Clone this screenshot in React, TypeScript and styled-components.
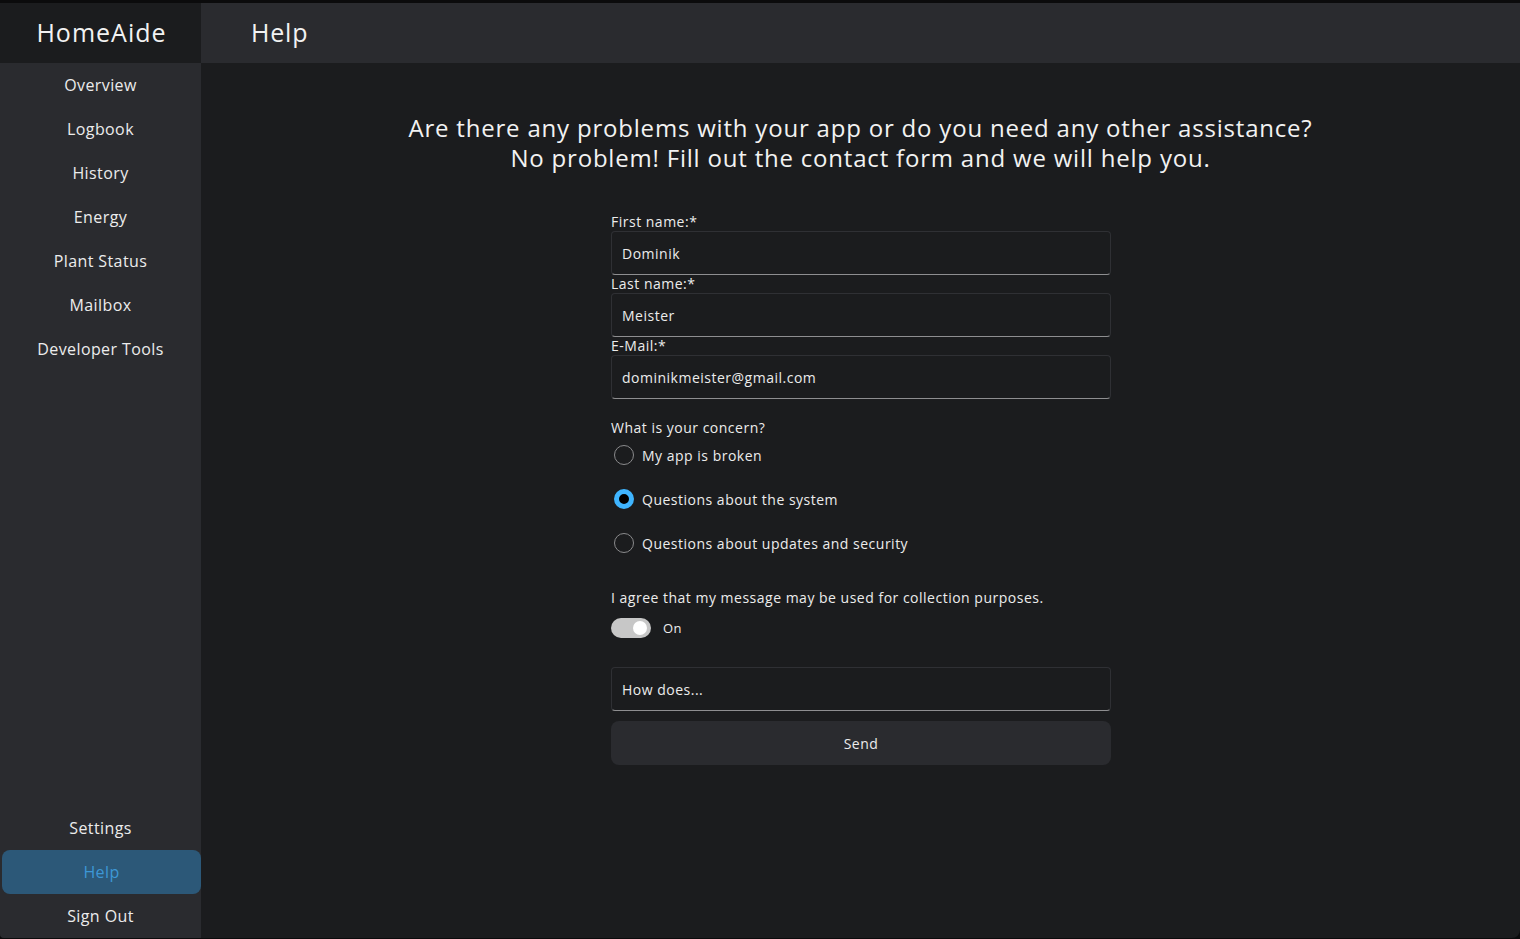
import React, { useState } from "react";
import styled, { createGlobalStyle } from "styled-components";

const GlobalStyle = createGlobalStyle`
  html, body { margin: 0; padding: 0; background: #0b0b0c; }
  body { font-family: "Open Sans", "Noto Sans", sans-serif; color: #ececec; }
  * { box-sizing: border-box; }
`;

const Shell = styled.div`
  margin-top: 3px;
  height: 935px;
  width: 1520px;
  display: grid;
  grid-template-columns: 201px 1fr;
  grid-template-rows: 60px 1fr;
  background: #1b1c1e;
  border-bottom-right-radius: 8px;
  border-bottom-left-radius: 4px;
  overflow: hidden;
`;

const Logo = styled.div`
  background: #1b1c1e;
  display: flex;
  align-items: center;
  justify-content: center;
  font-size: 25px;
  color: #f2f2f2;
  letter-spacing: 1px;
  padding-bottom: 2px;
  padding-left: 2px;
`;

const TopBar = styled.header`
  background: #2a2b2f;
  display: flex;
  align-items: center;
  padding-left: 50px;
  padding-bottom: 2px;
  font-size: 25px;
  color: #f2f2f2;
  letter-spacing: 0.8px;
`;

const Sidebar = styled.nav`
  background: #2a2b2f;
  display: flex;
  flex-direction: column;
  justify-content: space-between;
`;

const NavGroup = styled.div`
  display: flex;
  flex-direction: column;
`;

const NavItem = styled.a<{ $active?: boolean }>`
  height: 44px;
  display: flex;
  align-items: center;
  justify-content: center;
  font-size: 16px;
  letter-spacing: 0.4px;
  color: ${(p) => (p.$active ? "#3d97d6" : "#ececec")};
  background: ${(p) => (p.$active ? "#2c5878" : "transparent")};
  border-radius: 8px;
  margin-left: ${(p) => (p.$active ? "2px" : "0")};
  text-decoration: none;
  cursor: pointer;
`;

const Main = styled.main`
  display: flex;
  flex-direction: column;
  align-items: center;
  padding-top: 50px;
`;

const Intro = styled.h1`
  margin: 0;
  font-weight: 400;
  font-size: 24px;
  line-height: 30px;
  letter-spacing: 0.8px;
  text-align: center;
  color: #f2f2f2;
`;

const Form = styled.form`
  width: 500px;
  margin-top: 40px;
  margin-left: 1px;
  display: flex;
  flex-direction: column;
  letter-spacing: 0.5px;
`;

const Label = styled.label`
  font-size: 14px;
  line-height: 18px;
  color: #ececec;
`;

const TextInput = styled.input`
  width: 100%;
  height: 44px;
  background: #1b1c1e;
  border: 1px solid #2f3034;
  border-bottom-color: #8e8e90;
  border-radius: 4px;
  padding: 0 10px;
  font-family: inherit;
  font-size: 14px;
  letter-spacing: 0.5px;
  color: #ececec;
  outline: none;
`;

const Question = styled.div`
  margin-top: 20px;
  font-size: 14px;
  line-height: 18px;
`;

const RadioList = styled.div`
  display: flex;
  flex-direction: column;
  gap: 24px;
  margin-top: 8px;
`;

const RadioRow = styled.label`
  display: flex;
  align-items: center;
  gap: 8px;
  height: 20px;
  font-size: 14px;
  padding-left: 3px;
  cursor: pointer;
`;

const RadioDot = styled.span<{ $checked?: boolean }>`
  width: 20px;
  height: 20px;
  border-radius: 50%;
  border: ${(p) => (p.$checked ? "5px solid #3fb5ff" : "1px solid #8a8a8c")};
  background: ${(p) => (p.$checked ? "#000" : "transparent")};
  flex-shrink: 0;
`;

const Consent = styled.div`
  margin-top: 36px;
  font-size: 14px;
  line-height: 18px;
`;

const ToggleRow = styled.div`
  display: flex;
  align-items: center;
  gap: 12px;
  margin-top: 11px;
  font-size: 13px;
`;

const Track = styled.span`
  position: relative;
  width: 40px;
  height: 20px;
  border-radius: 10px;
  background: #c7c7c7;
`;

const Knob = styled.span`
  position: absolute;
  right: 4px;
  top: 3px;
  width: 14px;
  height: 14px;
  border-radius: 50%;
  background: #ffffff;
`;

const Message = styled(TextInput)`
  margin-top: 29px;
`;

const SendButton = styled.button`
  margin-top: 10px;
  height: 44px;
  border: none;
  border-radius: 8px;
  background: #2a2b2f;
  color: #ececec;
  font-family: inherit;
  font-size: 14px;
  letter-spacing: 0.5px;
  cursor: pointer;
`;

export default function App() {
  const [concern, setConcern] = useState(1);
  const concerns = [
    "My app is broken",
    "Questions about the system",
    "Questions about updates and security",
  ];
  const top = ["Overview", "Logbook", "History", "Energy", "Plant Status", "Mailbox", "Developer Tools"];
  return (
    <>
      <GlobalStyle />
      <Shell>
        <Logo>HomeAide</Logo>
        <TopBar>Help</TopBar>
        <Sidebar>
          <NavGroup>
            {top.map((t) => (
              <NavItem key={t}>{t}</NavItem>
            ))}
          </NavGroup>
          <NavGroup>
            <NavItem>Settings</NavItem>
            <NavItem $active>Help</NavItem>
            <NavItem>Sign Out</NavItem>
          </NavGroup>
        </Sidebar>
        <Main>
          <Intro>
            Are there any problems with your app or do you need any other assistance?
            <br />
            No problem! Fill out the contact form and we will help you.
          </Intro>
          <Form onSubmit={(e) => e.preventDefault()}>
            <Label>First name:*</Label>
            <TextInput defaultValue="Dominik" />
            <Label>Last name:*</Label>
            <TextInput defaultValue="Meister" />
            <Label>E-Mail:*</Label>
            <TextInput defaultValue="dominikmeister@gmail.com" />
            <Question>What is your concern?</Question>
            <RadioList>
              {concerns.map((c, i) => (
                <RadioRow key={c} onClick={() => setConcern(i)}>
                  <RadioDot $checked={concern === i} />
                  {c}
                </RadioRow>
              ))}
            </RadioList>
            <Consent>I agree that my message may be used for collection purposes.</Consent>
            <ToggleRow>
              <Track>
                <Knob />
              </Track>
              On
            </ToggleRow>
            <Message defaultValue="How does..." />
            <SendButton type="submit">Send</SendButton>
          </Form>
        </Main>
      </Shell>
    </>
  );
}
